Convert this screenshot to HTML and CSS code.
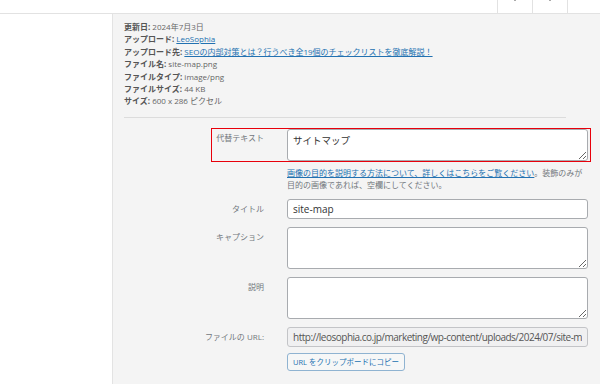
FILE: index.html
```html
<!DOCTYPE html>
<html lang="ja">
<head>
  <meta charset="UTF-8" />
  <meta name="viewport" content="width=device-width, initial-scale=1.0"/>
  <title>添付ファイルの詳細</title>
  <link rel="stylesheet" href="styles.css">
</head>
<body>

  <header class="modal-top">
    <div class="nav-buttons">
      <button class="nav-btn" type="button">
        <svg width="8" height="4" viewBox="0 0 8 4"><path d="M1 0 L4 3 L7 0" fill="none" stroke="#aaa" stroke-width="1"/></svg>
      </button>
      <button class="nav-btn" type="button">
        <svg width="8" height="4" viewBox="0 0 8 4"><path d="M1 0 L4 3 L7 0" fill="none" stroke="#aaa" stroke-width="1"/></svg>
      </button>
      <button class="nav-btn last" type="button"></button>
    </div>
  </header>

  <div class="modal-body">
    <div class="preview-area"></div>

    <div class="attachment-info">
      <div class="details">
        <div><strong>更新日:</strong> 2024年7月3日</div>
        <div><strong>アップロード:</strong> <a href="#">LeoSophia</a></div>
        <div><strong>アップロード先:</strong> <a href="#">SEOの内部対策とは？行うべき全19個のチェックリストを徹底解説！</a></div>
        <div><strong>ファイル名:</strong> site-map.png</div>
        <div><strong>ファイルタイプ:</strong> image/png</div>
        <div><strong>ファイルサイズ:</strong> 44 KB</div>
        <div><strong>サイズ:</strong> 600 x 286 ピクセル</div>
      </div>

      <hr class="divider">

      <div class="settings">
        <div class="setting alt-row">
          <label for="alt">代替テキスト</label>
          <div class="field">
            <textarea id="alt" class="ta-short">サイトマップ</textarea>
          </div>
          <span class="highlight"></span>
        </div>

        <div class="setting help-row">
          <span></span>
          <p class="help"><a href="#">画像の目的を説明する方法について、詳しくはこちらをご覧ください</a>。装飾のみが<br>目的の画像であれば、空欄にしてください。</p>
        </div>

        <div class="setting">
          <label for="title">タイトル</label>
          <div class="field"><input type="text" id="title" value="site-map"></div>
        </div>

        <div class="setting">
          <label for="caption">キャプション</label>
          <div class="field"><textarea id="caption" class="ta-tall"></textarea></div>
        </div>

        <div class="setting">
          <label for="desc">説明</label>
          <div class="field"><textarea id="desc" class="ta-tall"></textarea></div>
        </div>

        <div class="setting url-row">
          <label for="url">ファイルの URL:</label>
          <div class="field">
            <input type="text" id="url" class="readonly" readonly value="http://leosophia.co.jp/marketing/wp-content/uploads/2024/07/site-map.png">
            <button type="button" class="btn-copy">URL をクリップボードにコピー</button>
          </div>
        </div>
      </div>
    </div>
  </div>

</body>
</html>
```

FILE: styles.css
```css
* {
  margin: 0;
  padding: 0;
  box-sizing: border-box;
  font-family: 'Open Sans', 'Noto Sans CJK JP', sans-serif;
}

body {
  background-color: white;
  color: #555;
  width: 600px;
  height: 384px;
  overflow: hidden;
}

.modal-top {
  height: 14px;
  border-bottom: 1px solid #e2e2e2;
  display: flex;
  justify-content: flex-end;
}

.nav-buttons {
  display: flex;
}

.nav-btn {
  width: 35px;
  height: 13px;
  background: white;
  border: none;
  border-left: 1px solid #e2e2e2;
  display: flex;
  justify-content: center;
  align-items: flex-start;
  overflow: hidden;
}

.nav-btn svg {
  margin-top: -2px;
}

.nav-btn.last {
  width: 33px;
}

.modal-body {
  display: flex;
  height: 370px;
}

.preview-area {
  width: 113px;
  background-color: white;
  border-right: 1px solid #e3e3e3;
}

.attachment-info {
  flex: 1;
  background-color: #f4f4f4;
  padding: 7px 11px 0 11px;
}

.details {
  font-size: 8px;
  line-height: 12.4px;
  color: #666;
}

.details strong {
  color: #555;
  font-weight: 700;
}

.details a {
  color: #2271b1;
}

.divider {
  border: none;
  border-top: 1px solid #dcdcdc;
  margin: 9px 23px 11px 0;
}

.setting {
  display: grid;
  grid-template-columns: 140px 301px;
  column-gap: 23px;
  margin-bottom: 8px;
}

.setting label {
  text-align: right;
  font-size: 8px;
  line-height: 12px;
  padding-top: 4px;
  color: #72777c;
}

.alt-row {
  position: relative;
  margin-bottom: 6px;
}

.alt-row label {
  padding-top: 3px;
}

.highlight {
  position: absolute;
  left: 87px;
  top: -1px;
  right: -2px;
  bottom: -1px;
  border: 1px solid #e8000b;
  pointer-events: none;
}

input,
textarea {
  display: block;
  width: 100%;
  border: 1px solid #a8abaf;
  border-radius: 3px;
  background: white;
  color: #333;
  font-size: 10px;
  padding: 0 5px;
}

input {
  height: 20px;
}

textarea {
  resize: vertical;
  padding-top: 4px;
}

.ta-short {
  height: 32px;
  font-family: 'Noto Sans CJK JP', sans-serif;
  font-size: 9.5px;
  line-height: 14px;
  padding-top: 3px;
}

.ta-tall {
  height: 42px;
}

.help {
  font-size: 8px;
  line-height: 12px;
  color: #72777c;
}

.help a {
  color: #2271b1;
}

.help-row {
  margin-bottom: 8px;
}

input.readonly {
  background-color: #f0f0f1;
  color: #555;
  border-color: #c3c4c7;
  letter-spacing: -0.5px;
}

.btn-copy {
  display: block;
  margin-top: 6px;
  height: 18px;
  padding: 0 5px;
  background: #f6f7f7;
  border: 1px solid #8fb3d1;
  border-radius: 3px;
  color: #2271b1;
  font-size: 7.5px;
  font-weight: 400;
}
```
